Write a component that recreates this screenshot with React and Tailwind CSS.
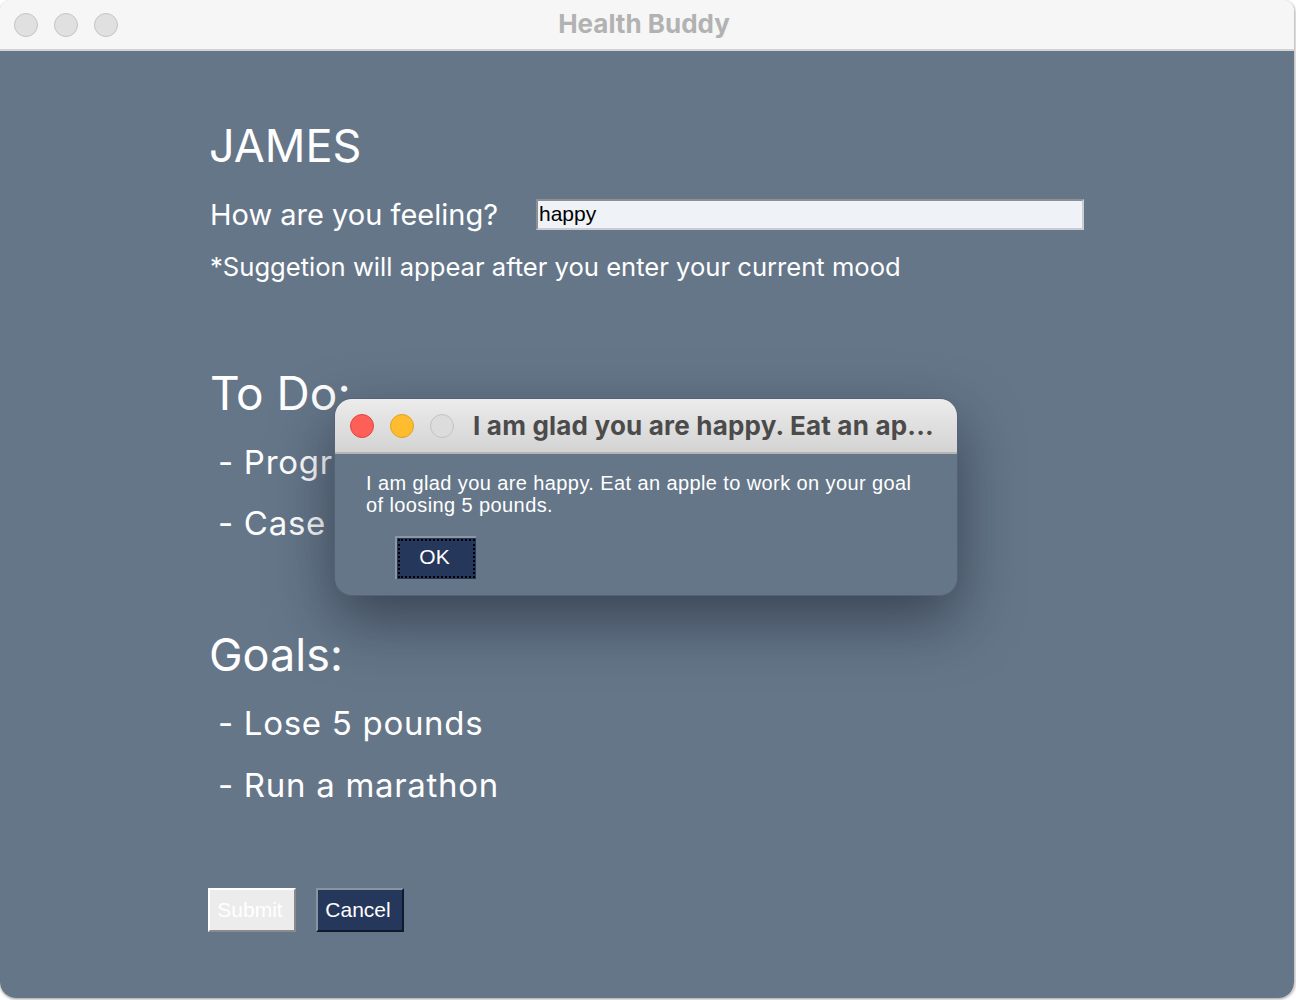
import React from 'react';

const sans = { fontFamily: 'Inter, "Noto Sans", sans-serif' };
const helv = { fontFamily: '"Liberation Sans", Arial, sans-serif' };

function Light({ color = 'bg-[#e0e0e0] border-[#c4c4c4]' }) {
  return <span className={`block w-6 h-6 rounded-full border ${color}`} />;
}

function Dialog() {
  return (
    <div className="absolute left-[334px] top-[398px] w-[624px] h-[198px] rounded-[18px] overflow-hidden bg-[#657689] border border-[#56627a] shadow-[0_24px_60px_rgba(20,28,40,0.55)] flex flex-col">
      {/* title bar */}
      <div className="h-[55px] shrink-0 bg-gradient-to-b from-[#ececec] to-[#d3d3d3] border-b-2 border-[#b5b5b5] flex items-center pl-[15px] gap-4">
        <Light color="bg-[#fe5f57] border-[#e0443e]" />
        <Light color="bg-[#febc2e] border-[#dea123]" />
        <Light color="bg-[#dcdcdc] border-[#c2c2c2]" />
        <span style={sans} className="ml-[3px] text-[26px] font-bold text-[#4b4b4b] tracking-[0.2px] whitespace-nowrap">
          I am glad you are happy. Eat an ap...
        </span>
      </div>
      {/* body */}
      <div className="flex flex-col pl-[31px] pt-[18px]">
        <p style={helv} className="text-[20px] leading-[22px] tracking-[0.4px] text-white">
          I am glad you are happy. Eat an apple to work on your goal
          <br />
          of loosing 5 pounds.
        </p>
        <button
          style={helv}
          className="mt-[20px] ml-[29px] w-[81px] h-[43px] bg-[#25375a] border-t-2 border-l-2 border-[#8d96a3] p-[1px] text-white text-[21px]"
        >
          <span className="flex w-full h-full items-center justify-center pb-[3px] pr-[4px] border-2 border-dotted border-black">OK</span>
        </button>
      </div>
    </div>
  );
}

export default function App() {
  return (
    <div className="relative w-[1296px] h-[1000px] bg-white overflow-hidden">
      <div className="w-[1295px] h-[998px] rounded-t-[12px] rounded-b-[16px] overflow-hidden border-r border-[#c8c8c8] shadow-[0_1px_3px_rgba(0,0,0,0.4)] flex flex-col">
        {/* window title bar */}
        <div className="h-[51px] shrink-0 bg-[#f6f6f6] border-b-2 border-[#d3d3d3] relative flex items-center pl-[14px] gap-4">
          <Light />
          <Light />
          <Light />
          <span style={sans} className="absolute left-0 right-0 text-center top-[4px] text-[26px] font-bold text-[#b2b2b2] pr-[6px]">
            Health Buddy
          </span>
        </div>

        {/* content */}
        <div style={sans} className="flex-1 bg-[#657689] text-white pl-[210px] pt-[67px] flex flex-col">
          <div className="h-[56px] text-[45px] leading-[56px] -ml-[1px]">JAMES</div>

          <div className="mt-[23px] h-[36px] flex">
            <span className="w-[326px] text-[29px] leading-[36px]">How are you feeling?</span>
            <div
              style={helv}
              className="mt-[2px] w-[548px] h-[31px] bg-[#eff2f7] border-2 border-t-[#8c9096] border-l-[#8c9096] border-r-[#c9cdd3] border-b-[#c9cdd3] text-black text-[21px] leading-[26px] pl-[1px]"
            >
              happy
            </div>
          </div>

          <div className="mt-[18px] h-[32px] text-[25.6px] leading-[32px]">
            *Suggetion will appear after you enter your current mood
          </div>

          <div className="mt-[82px] h-[56px] text-[46px] leading-[56px]">To Do:</div>
          <div className="mt-[21px] h-[40px] text-[33px] leading-[40px] tracking-[0.7px] pl-[8px]">- Programming</div>
          <div className="mt-[21px] h-[40px] text-[33px] leading-[40px] tracking-[0.7px] pl-[8px]">- Case study</div>

          <div className="mt-[84px] h-[56px] text-[45px] leading-[56px] -ml-[1px]">Goals:</div>
          <div className="mt-[20px] h-[40px] text-[33px] leading-[40px] tracking-[0.7px] pl-[8px]">- Lose 5 pounds</div>
          <div className="mt-[22px] h-[40px] text-[33px] leading-[40px] tracking-[0.7px] pl-[8px]">- Run a marathon</div>

          <div style={helv} className="mt-[83px] -ml-[2px] flex gap-[20px]">
            <button className="w-[88px] h-[44px] bg-[#ececec] border-2 border-t-white border-l-white border-r-[#8a8a8a] border-b-[#8a8a8a] text-white text-[21px] pr-[4px]">
              Submit
            </button>
            <button className="w-[88px] h-[44px] bg-[#25375a] border-2 border-t-[#8a939f] border-l-[#8a939f] border-r-[#0f1a2e] border-b-[#0f1a2e] text-white text-[21px] pr-[4px]">
              Cancel
            </button>
          </div>
        </div>
      </div>

      <Dialog />
    </div>
  );
}
